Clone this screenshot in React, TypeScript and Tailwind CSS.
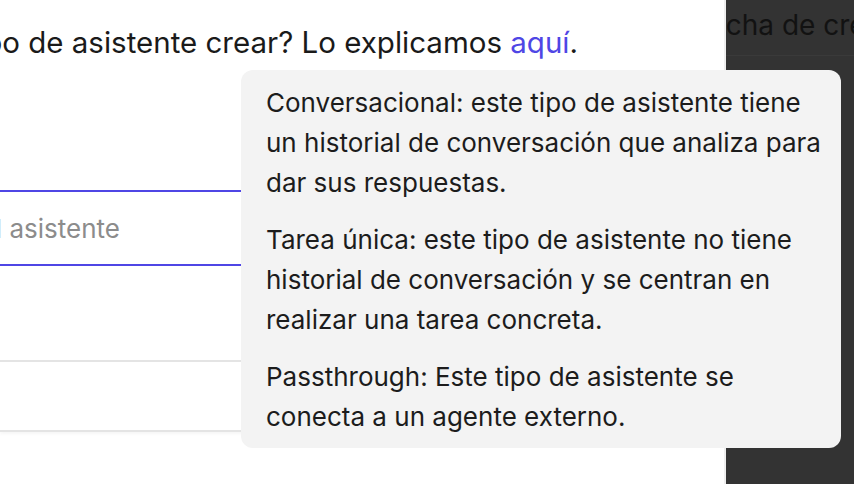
import React from "react";

const tips = [
  "Conversacional: este tipo de asistente tiene un historial de conversación que analiza para dar sus respuestas.",
  "Tarea única: este tipo de asistente no tiene historial de conversación y se centran en realizar una tarea concreta.",
  "Passthrough: Este tipo de asistente se conecta a un agente externo.",
];

const App = () => {
  return (
    <div
      className="relative flex h-[484px] w-[854px] overflow-hidden bg-white text-[#1a1a1a]"
      style={{ fontFamily: "Inter, 'Noto Sans', sans-serif" }}
    >
      <main className="flex w-[724px] shrink-0 flex-col">
        <div className="mt-[24px] flex w-[578px] justify-end whitespace-nowrap text-[29.5px] leading-[36px]">
          <span>
            ¿Qué tipo de asistente crear? Lo explicamos{" "}
            <a className="text-[#4f46e5]">aquí</a>.
          </span>
        </div>

        <div className="mt-[130px] flex h-[76px] items-center border-y-2 border-[#4f46e5]">
          <div className="flex w-[120px] justify-end whitespace-nowrap text-[26px] text-[#8c8c8c]">
            Nombre del asistente
          </div>
        </div>

        <div className="mt-[94px] h-[72px] border-y-2 border-[#e4e4e4] shadow-[0_2px_3px_rgba(0,0,0,0.04)]"></div>
      </main>

      <aside className="flex-1 overflow-hidden border-l-2 border-[#eeeeee] bg-[#333333]">
        <div className="h-[56px] border-b border-[#3a3a3a] pt-[4px] whitespace-nowrap text-[28px] text-[#121212]">
          <span className="ml-[-32px]">Fecha de creación</span>
        </div>
      </aside>

      <div className="absolute left-[241px] top-[70px] w-[600px] rounded-[12px] bg-[#f3f3f3] pb-[11px] pl-[25px] pr-[20px] pt-[13px] text-[26px] leading-[40px] text-[#1c1c1c]">
        {tips.map((tip, i) => (
          <p key={i} className={i > 0 ? "mt-[17px]" : ""}>
            {tip}
          </p>
        ))}
      </div>
    </div>
  );
};

export default App;
